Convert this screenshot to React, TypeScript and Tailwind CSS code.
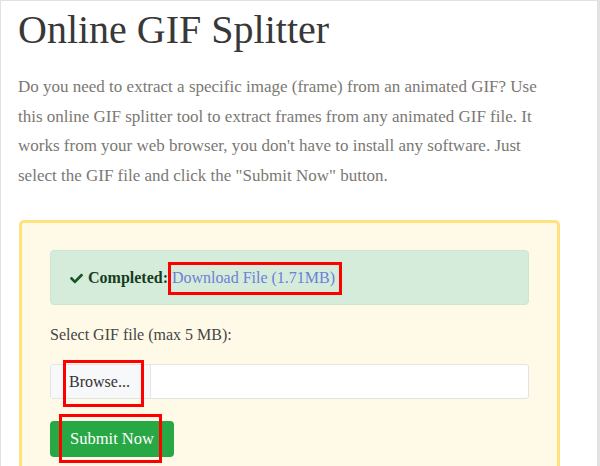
import React from 'react';

const serif = { fontFamily: '"Liberation Serif", "Times New Roman", serif' };

function CheckIcon() {
  return (
    <svg viewBox="0 0 512 512" className="w-[13px] h-[13px] fill-[#155724] shrink-0">
      <path d="M173.898 439.404l-166.4-166.4c-9.997-9.997-9.997-26.206 0-36.204l36.203-36.204c9.997-9.998 26.207-9.998 36.204 0L192 312.69 432.095 72.596c9.997-9.997 26.207-9.997 36.204 0l36.203 36.204c9.997 9.997 9.997 26.206 0 36.204l-294.4 294.401c-9.998 9.997-26.207 9.997-36.204-.001z" />
    </svg>
  );
}

export default function App() {
  return (
    <div
      className="relative w-[600px] h-[466px] overflow-hidden bg-white border-l border-t border-r-[3px] border-[#e2e2e2]"
      style={serif}
    >
      <div className="pl-[17px]">
        {/* Title */}
        <h1 className="mt-[5px] text-[40px] leading-[48px] text-[#383838]">Online GIF Splitter</h1>

        {/* Intro */}
        <p className="mt-[18px] w-[560px] whitespace-nowrap text-[17px] leading-[29.5px] text-[#7b7873]">
          Do you need to extract a specific image (frame) from an animated GIF? Use<br />
          this online GIF splitter tool to extract frames from any animated GIF file. It<br />
          works from your web browser, you don't have to install any software. Just<br />
          select the GIF file and click the "Submit Now" button.
        </p>

        {/* Tool box */}
        <div className="mt-[30px] ml-[1px] w-[541px] h-[300px] rounded-[5px] border-[3px] border-[#ffe27e] bg-[#fffae8] pt-[27px] px-[28px]">
          <div className="rounded-[4px] border border-[#c9e7d1] bg-[#d5ecdb] pl-[19px] pt-[15px] pb-[14px] flex items-center text-[16px] leading-[24px]">
            <CheckIcon />
            <span className="ml-[5px] font-bold text-[#173d22]">Completed:</span>
            <span className="ml-[4px] text-[#6d7fd8]">Download File (1.71MB)</span>
          </div>

          <div className="mt-[18px] text-[16px] leading-[24px] text-[#454545]">Select GIF file (max 5 MB):</div>

          <div className="mt-[17px] flex h-[35px] rounded-[3px] border border-[#e4e4e4] bg-white text-[16px] text-[#333]">
            <div className="w-[100px] flex items-center pl-[18px] bg-[#f7f8f9] border-r border-[#e4e4e4]">Browse...</div>
            <div className="flex-1" />
          </div>

          <button className="mt-[22px] w-[124px] h-[36px] rounded-[4px] bg-[#28a745] text-white text-[16.5px] flex items-center justify-center">
            Submit Now
          </button>
        </div>
      </div>

      {/* annotation boxes */}
      <div className="absolute left-[167px] top-[261px] w-[174px] h-[33px] border-[3px] border-[#f00]" />
      <div className="absolute left-[62px] top-[359px] w-[81px] h-[47px] border-[3px] border-[#f00]" />
      <div className="absolute left-[58px] top-[413px] w-[103px] h-[49px] border-[3px] border-[#f00]" />
    </div>
  );
}
